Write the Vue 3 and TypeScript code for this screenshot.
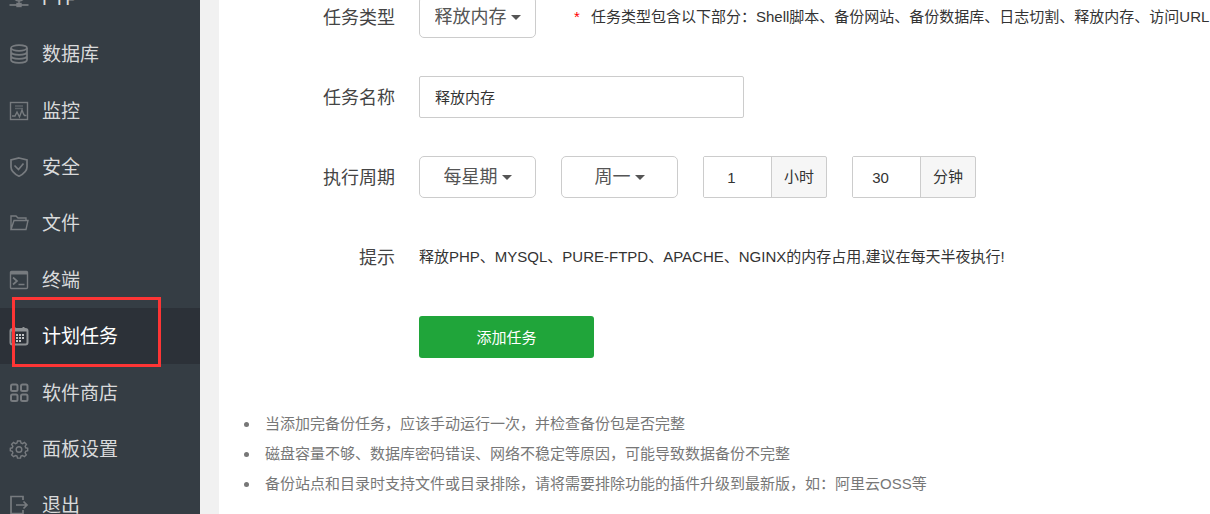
<script setup lang="ts">
import { ref } from 'vue'

interface NavItem {
  id: string
  label: string
  active?: boolean
}

const navItems: NavItem[] = [
  { id: 'ftp', label: 'FTP' },
  { id: 'database', label: '数据库' },
  { id: 'monitor', label: '监控' },
  { id: 'security', label: '安全' },
  { id: 'files', label: '文件' },
  { id: 'terminal', label: '终端' },
  { id: 'cron', label: '计划任务', active: true },
  { id: 'store', label: '软件商店' },
  { id: 'settings', label: '面板设置' },
  { id: 'logout', label: '退出' },
]

const notes: string[] = [
  '当添加完备份任务，应该手动运行一次，并检查备份包是否完整',
  '磁盘容量不够、数据库密码错误、网络不稳定等原因，可能导致数据备份不完整',
  '备份站点和目录时支持文件或目录排除，请将需要排除功能的插件升级到最新版，如：阿里云OSS等',
]

const taskType = ref('释放内存')
const taskName = ref('释放内存')
const cycle = ref('每星期')
const weekday = ref('周一')
const hour = ref(1)
const minute = ref(30)
</script>

<template>
  <div class="page">
    <aside class="sidebar">
      <nav>
        <ul class="nav">
          <li v-for="item in navItems" :key="item.id" :class="{ active: item.active }">
            <a href="#" :aria-current="item.active ? 'page' : undefined">
              <svg class="icon" viewBox="0 0 20 20" aria-hidden="true">
                <g v-if="item.id === 'ftp'">
                  <circle cx="10" cy="7" r="6" />
                  <path d="M4 7h12M5 10h10M10 1v12M10 13v3" />
                  <path d="M0.500 17h19" class="mid" />
                  <rect x="8" y="15.500" width="4" height="3" class="solid" />
                </g>
                <g v-else-if="item.id === 'database'" class="mid">
                  <ellipse cx="10" cy="4" rx="8" ry="2.800" />
                  <path d="M2 4v12c0 1.600 3.600 2.800 8 2.800s8-1.200 8-2.800V4M2 8c0 1.600 3.600 2.800 8 2.800S18 9.600 18 8M2 12c0 1.600 3.600 2.800 8 2.800s8-1.200 8-2.800" />
                </g>
                <g v-else-if="item.id === 'monitor'">
                  <rect x="1.500" y="1.500" width="17" height="17" />
                  <path d="M6 5h8M6 7.500h8" class="dim" />
                  <path d="M3 15h3l2-4 2.500 5 2.500-7 1.500 4 1 1.500h2" />
                </g>
                <g v-else-if="item.id === 'security'" class="mid">
                  <path d="M10 1 18 3v7c0 4-3.500 7-8 9.200C5.500 17 2 14 2 10V3z" />
                  <path d="m5.500 8.500 4 4 5-6" />
                </g>
                <g v-else-if="item.id === 'files'">
                  <path d="M2 16.500V3h5l2 2h8v2.500M2 16.500 5 7.500h14l-2 9z" />
                </g>
                <g v-else-if="item.id === 'terminal'">
                  <rect x="1.500" y="1.500" width="17" height="17" rx="1" />
                  <path d="M2 3h16" class="thick" />
                  <path d="m4 7.500 4 3.500-4 3.500M9.500 14.500h6" class="mid" />
                </g>
                <g v-else-if="item.id === 'cron'">
                  <rect x="1.500" y="3" width="17" height="15.500" rx="2" class="heavy" />
                  <path d="M2 4.500h16M5.500 1v4M14.500 1v4" class="heavy" />
                  <path d="M7 9h9M4 12h12M4 15h9" class="dots" />
                </g>
                <g v-else-if="item.id === 'store'" class="heavy">
                  <rect x="2" y="1.500" width="6.500" height="6.500" rx="1.500" />
                  <rect x="12" y="1.500" width="6.500" height="6.500" rx="1.500" />
                  <rect x="2" y="11.500" width="6.500" height="6.500" rx="1.500" />
                  <rect x="12" y="11.500" width="6.500" height="6.500" rx="1.500" />
                </g>
                <g v-else-if="item.id === 'settings'">
                  <path d="M8.500 2h3l.5 2 1.500.6 2-1.200 1.900 1.900-1.300 2 .6 1.500 2 .4v2.600l-2 .5-.6 1.500 1.200 2-1.900 1.900-2-1.200-1.500.6-.4 2H8.500l-.5-2-1.500-.6-2 1.200-1.900-1.900 1.300-2-.6-1.500-2-.5V9.200l2-.4.6-1.500-1.300-2 1.900-1.900 2 1.200L8 4z" />
                  <circle cx="10" cy="10.500" r="2.800" />
                </g>
                <g v-else class="mid">
                  <path d="M14 5V1.500H2v17h12V15" />
                  <path d="M7 10h11M14.500 6.500 18 10l-3.500 3.500" />
                </g>
              </svg>
              <span class="nav-text">{{ item.label }}</span>
            </a>
            <span v-if="item.active" class="marker" aria-hidden="true"></span>
          </li>
        </ul>
      </nav>
    </aside>

    <main class="content">
      <form class="form" @submit.prevent>
        <div class="row">
          <label class="label" for="task-type">任务类型</label>
          <div class="dropdown">
            <select id="task-type" v-model="taskType">
              <option>释放内存</option>
            </select>
            <svg class="caret" viewBox="0 0 10 5" aria-hidden="true"><path d="M0 0h10L5 5z" /></svg>
          </div>
          <p class="hint"><span class="star">*</span>任务类型包含以下部分：Shell脚本、备份网站、备份数据库、日志切割、释放内存、访问URL</p>
        </div>

        <div class="row">
          <label class="label" for="task-name">任务名称</label>
          <input id="task-name" v-model="taskName" class="text-input" type="text" />
        </div>

        <div class="row">
          <label class="label" for="cycle">执行周期</label>
          <div class="group">
            <div class="dropdown">
              <select id="cycle" v-model="cycle">
                <option>每星期</option>
              </select>
              <svg class="caret" viewBox="0 0 10 5" aria-hidden="true"><path d="M0 0h10L5 5z" /></svg>
            </div>
            <div class="dropdown">
              <select v-model="weekday" aria-label="星期">
                <option>周一</option>
              </select>
              <svg class="caret" viewBox="0 0 10 5" aria-hidden="true"><path d="M0 0h10L5 5z" /></svg>
            </div>
            <div class="unit-field">
              <input id="hour" v-model="hour" type="number" min="0" max="23" />
              <label for="hour">小时</label>
            </div>
            <div class="unit-field">
              <input id="minute" v-model="minute" type="number" min="0" max="59" />
              <label for="minute">分钟</label>
            </div>
          </div>
        </div>

        <div class="row">
          <span class="label">提示</span>
          <p>释放PHP、MYSQL、PURE-FTPD、APACHE、NGINX的内存占用,建议在每天半夜执行!</p>
        </div>

        <div class="row">
          <span class="label"></span>
          <button class="submit" type="submit">添加任务</button>
        </div>
      </form>

      <ul class="notes">
        <li v-for="note in notes" :key="note">{{ note }}</li>
      </ul>
    </main>
  </div>
</template>

<style>
body {
  background: #f1f1f1;
}
</style>

<style scoped>
.page,
.page * {
  box-sizing: border-box;
}

.page {
  display: flex;
  gap: 19px;
  height: 100vh;
  overflow: hidden;
  background: #f1f1f1;
  color: #333;
  font-family: 'Liberation Sans', 'Noto Sans CJK SC', sans-serif;
  font-size: 15px;
  line-height: 30px;
}

.page p,
.page ul {
  margin: 0;
  padding: 0;
}

.page input,
.page select,
.page button {
  font-family: inherit;
}

.sidebar {
  flex: 0 0 200px;
  background: #353d44;
}

.nav {
  display: flex;
  flex-direction: column;
  gap: 1px;
  height: 563px;
  list-style: none;
}

.sidebar nav {
  margin-top: -30px;
}

.nav li {
  position: relative;
  flex: 1;
}

.nav a {
  display: flex;
  align-items: center;
  gap: 13px;
  height: 100%;
  padding-left: 9px;
  color: #d9dadb;
  font-size: 19px;
  text-decoration: none;
}

.nav-text {
  padding-top: 2px;
}

.nav .active {
  background: #2c3138;
}

.nav .active a {
  color: #fff;
}

.icon {
  flex: none;
  width: 20px;
  height: 20px;
  fill: none;
  stroke: #777b7f;
  stroke-width: 1.4;
}

.icon .solid {
  fill: #777b7f;
}

.icon .dim {
  stroke: #5d6368;
}

.icon .mid {
  stroke-width: 1.7;
}

.icon .thick {
  stroke-width: 3;
}

.icon .heavy {
  stroke-width: 2;
}

.icon .dots {
  stroke: #c5c7c9;
  stroke-width: 2;
  stroke-dasharray: 2 1;
}

.active .icon {
  stroke: #8e9194;
}

.marker {
  position: absolute;
  top: -11px;
  left: 12px;
  width: 149px;
  height: 70px;
  border: 3px solid #fd3535;
  pointer-events: none;
}

.content {
  flex: 1;
  min-width: 0;
  background: #fff;
}

.form {
  display: flex;
  flex-direction: column;
  gap: 38px;
  margin-top: -4px;
}

.row {
  display: flex;
  align-items: center;
  min-height: 42px;
  white-space: nowrap;
}

.label {
  flex: 0 0 176px;
  margin-right: 24px;
  padding-top: 2px;
  color: #444;
  font-size: 18px;
  text-align: right;
}

.group {
  display: flex;
  gap: 25px;
}

.dropdown {
  display: flex;
  flex: none;
  align-items: center;
  justify-content: center;
  gap: 4px;
  width: 117px;
  height: 42px;
  border: 1px solid #ccc;
  border-radius: 5px;
  background: #fff;
}

.dropdown select {
  appearance: none;
  margin: 0;
  padding: 0;
  border: 0;
  background: transparent;
  color: #555;
  font-size: 18px;
  line-height: 30px;
}

.caret {
  width: 10px;
  height: 5px;
  fill: #555;
  pointer-events: none;
}

.page .hint {
  margin-left: 38px;
}

.star {
  display: inline-block;
  width: 17px;
  color: #f00;
}

.text-input {
  width: 325px;
  height: 42px;
  padding: 0 15px 2px;
  border: 1px solid #ccc;
  border-radius: 2px;
  background: #fff;
  color: #333;
  font-size: 15px;
}

.unit-field {
  display: flex;
  height: 42px;
  border: 1px solid #ccc;
  border-radius: 2px;
  background: #f6f6f6;
}

.unit-field input {
  appearance: textfield;
  width: 68px;
  padding: 0 12px 0 0;
  border: 0;
  border-right: 1px solid #ccc;
  background: #fff;
  color: #333;
  font-size: 15px;
  text-align: center;
}

.unit-field input::-webkit-inner-spin-button {
  appearance: none;
  margin: 0;
}

.unit-field label {
  padding: 0 12px;
  line-height: 40px;
}

.submit {
  width: 175px;
  height: 42px;
  padding: 0 0 2px;
  border: 0;
  border-radius: 3px;
  background: #20a53a;
  color: #fff;
  font-size: 15px;
}

.content .notes {
  margin-top: 51px;
  padding-left: 25px;
  color: #777;
  list-style: none;
}

.notes li {
  display: flex;
  align-items: center;
  gap: 16px;
}

.notes li::before {
  flex: none;
  width: 5px;
  height: 5px;
  border-radius: 50%;
  background: #777;
  content: '';
}
</style>
